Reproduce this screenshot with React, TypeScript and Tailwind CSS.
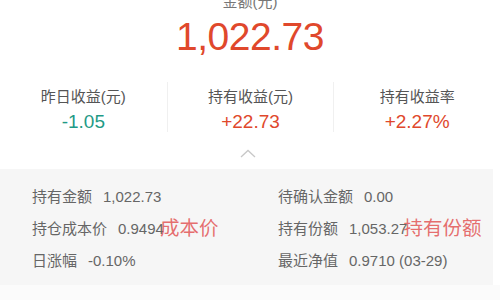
import * as React from "react";

const stats: { label: string; value: string; color: string }[] = [
  { label: "昨日收益(元)", value: "-1.05", color: "text-[#1f9a86]" },
  { label: "持有收益(元)", value: "+22.73", color: "text-[#e0482c]" },
  { label: "持有收益率", value: "+2.27%", color: "text-[#e0482c]" },
];

const rows: { left: [string, string, string?]; right: [string, string, string?] }[] = [
  { left: ["持有金额", "1,022.73"], right: ["待确认金额", "0.00"] },
  { left: ["持仓成本价", "0.9494", "成本价"], right: ["持有份额", "1,053.27", "持有份额"] },
  { left: ["日涨幅", "-0.10%"], right: ["最近净值", "0.9710 (03-29)"] },
];

function Cell({ item }: { item: [string, string, string?] }) {
  const [label, value, mark] = item;
  return (
    <div className="flex items-center whitespace-nowrap">
      <span>{label}</span>
      <span className="ml-[11px]">{value}</span>
      {mark && (
        <span className="ml-[-4px] text-[19.5px] leading-[24px] text-[#e25555]/85 font-['Liberation_Serif','Noto_Sans_CJK_SC',serif]">
          {mark}
        </span>
      )}
    </div>
  );
}

export default function App() {
  return (
    <div className="w-[500px] h-[300px] overflow-hidden bg-white font-['Liberation_Sans','Noto_Sans_CJK_SC',sans-serif]">
      {/* Header amount */}
      <div className="text-center text-[15px] leading-[20px] text-[#777] mt-[-8px]">金额(元)</div>
      <div className="text-center text-[39px] leading-[40px] text-[#e0482c] mt-[5px] tracking-[-0.5px]">
        1,022.73
      </div>

      {/* Stats */}
      <div className="grid grid-cols-3 mt-[25px]">
        {stats.map((s, i) => (
          <div
            key={s.label}
            className={`flex flex-col items-center h-[50px] ${i > 0 ? "border-l border-[#f0f0f0]" : ""}`}
          >
            <div className="text-[15px] leading-[20px] text-[#555] mt-[5px]">{s.label}</div>
            <div className={`text-[19px] leading-[24px] mt-[3px] ${s.color}`}>{s.value}</div>
          </div>
        ))}
      </div>

      {/* Caret */}
      <div className="flex justify-center mt-[17px] pr-[4px]">
        <svg width="16" height="9" viewBox="0 0 16 9" fill="none">
          <path d="M1 8 L8 1.5 L15 8" stroke="#c8c8c8" strokeWidth="1.3" />
        </svg>
      </div>

      {/* Detail panel */}
      <div className="mt-[11px] w-[493px] h-[116px] bg-[#f6f6f6] pt-[12px] text-[15px] leading-[20px] text-[#666]">
        {rows.map((r, i) => (
          <div key={i} className="grid grid-cols-[248px_1fr] h-[32px] items-center">
            <div className="pl-[32px]">
              <Cell item={r.left} />
            </div>
            <div className="pl-[30px]">
              <Cell item={r.right} />
            </div>
          </div>
        ))}
      </div>
      <div className="h-[20px] bg-[#fbfbfb]" />
    </div>
  );
}
